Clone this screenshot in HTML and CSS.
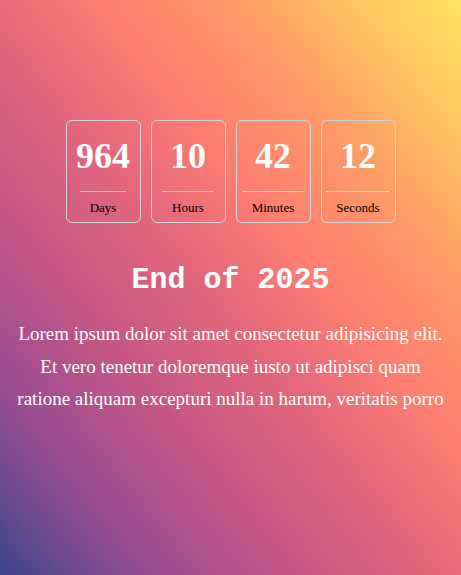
FILE: index.html
```html
<!DOCTYPE html>
<html lang="en">
<head>
<meta charset="utf-8">
<title>Countdown</title>
<link rel="stylesheet" href="styles.css">
</head>
<body>
<main class="page">
  <section class="countdown">
    <div class="card"><span class="num">964</span><span class="label">Days</span></div>
    <div class="card"><span class="num">10</span><span class="label">Hours</span></div>
    <div class="card"><span class="num">42</span><span class="label">Minutes</span></div>
    <div class="card"><span class="num">12</span><span class="label">Seconds</span></div>
  </section>
  <h1 class="title">End of 2025</h1>
  <p class="text">Lorem ipsum dolor sit amet consectetur adipisicing elit. Et vero tenetur doloremque iusto ut adipisci quam ratione aliquam excepturi nulla in harum, veritatis porro</p>
</main>
</body>
</html>
```

FILE: styles.css
```css
html, body {
  margin: 0;
  padding: 0;
  height: 100%;
}

body {
  font-family: "Liberation Serif", "Times New Roman", serif;
  background: linear-gradient(to top right,
    #3b448c 0%,
    #6a4a8e 8%,
    #9a4d91 17%,
    #c75784 33%,
    #e86a7a 50%,
    #ff7f70 61%,
    #ff9a68 75%,
    #ffbf62 86%,
    #ffe563 100%);
  min-height: 100vh;
}

.page {
  display: flex;
  flex-direction: column;
  align-items: center;
  padding: 120px 14.5px 0;
}

.countdown {
  display: flex;
  gap: 10px;
}

.card {
  width: 75px;
  box-sizing: border-box;
  border: 1px solid #d2d2d2;
  border-radius: 6px;
  padding: 15px 0 7px;
  display: flex;
  flex-direction: column;
  align-items: center;
}

.num {
  font-size: 36px;
  font-weight: bold;
  line-height: 41px;
  color: #fff;
  margin-bottom: 14px;
}

.label {
  font-size: 13px;
  line-height: 15px;
  color: #000;
  border-top: 1px solid rgba(255, 255, 255, 0.55);
  padding: 8px 10px 0;
}

.title {
  font-family: "Liberation Mono", "Courier New", monospace;
  font-size: 30px;
  font-weight: bold;
  line-height: 34px;
  color: #fff;
  margin: 40px 0 0;
}

.text {
  font-size: 19px;
  line-height: 32.5px;
  color: #fff;
  text-align: center;
  margin: 21px 0 0;
}
```
